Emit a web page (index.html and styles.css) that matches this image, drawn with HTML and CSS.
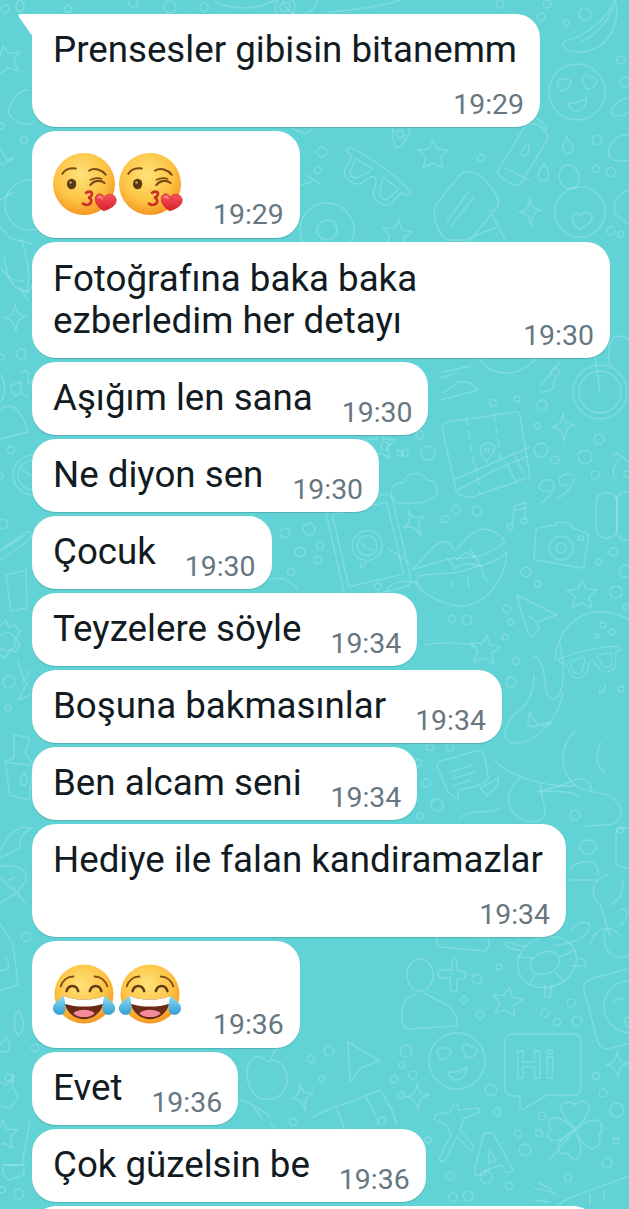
FILE: index.html
```html
<!DOCTYPE html>
<html lang="tr">
<head>
<meta charset="utf-8">
<title>Sohbet</title>
<link rel="stylesheet" href="styles.css">
</head>
<body>
<svg class="wallpaper" viewBox="0 0 629 1209" width="629" height="1209" aria-hidden="true">
  <defs>
    <path id="star4" d="M0-14C1-5 3-3 12-2 4 0 2 3 1 14-1 4-3 1-11 0-3-2-1-5 0-14Z"/>
    <path id="star5" d="M0-15 4-6 15-5 7 2 10 13 0 8-10 13-7 2-15-5-4-6Z" stroke-linejoin="round"/>
    <g id="heartface">
      <circle r="28"/>
      <path d="M-19-7c-2-5 3-8 6-5 3-3 9 0 6 5-1 3-5 6-9 6-1-2-2-4-3-6Z"/>
      <path d="M5-12c1-5 7-6 9-2 4-1 8 3 5 6-2 3-6 5-9 5-2-3-4-6-5-9Z"/>
      <path d="M-9 11c6 1 13-1 18-5 1 7-3 13-9 13-5 0-8-4-9-8Z"/>
    </g>
    <g id="glasses">
      <path d="M-36-15C-14-18 14-18 36-15 40-14 39-9 36-9L31-8 28 8C26 14 12 15 8 9L3-3C1-5-1-5-3-3L-8 9C-12 15-26 14-28 8L-31-8-36-9C-39-9-40-14-36-15Z"/>
      <path d="M-25-9-8-10C-7-10-7-8-8-6L-13 5C-15 9-21 9-23 6L-26-6C-26-8-26-9-25-9ZM25-9 8-10C7-10 7-8 8-6L13 5C15 9 21 9 23 6L26-6C26-8 26-9 25-9Z"/>
    </g>
  </defs>
  <g class="doodles">
    <!-- top strip -->
    <circle cx="5" cy="9" r="4"/><ellipse cx="20" cy="6" rx="4" ry="6"/><circle cx="68" cy="9" r="3.5"/>
    <circle cx="133" cy="2" r="5"/><circle cx="170" cy="7" r="6"/><circle cx="204" cy="7" r="4"/>
    <path d="M215 2C240 12 260 8 275 0"/><circle cx="285" cy="7" r="10"/><circle cx="285" cy="7" r="5"/>
    <circle cx="300" cy="-2" r="17"/><path d="M330 12C370 8 395 4 410 -4"/>
    <circle cx="500" cy="4" r="4"/><circle cx="547" cy="4" r="4"/>
    <circle cx="585" cy="14" r="6"/><circle cx="566" cy="23" r="3"/><circle cx="541" cy="17" r="4"/>
    <!-- banana -->
    <path d="M563 42C585 36 605 22 615 0 622 22 608 52 578 52 568 52 562 48 563 42ZM580 42C595 37 606 24 614 6"/>
    <use href="#heartface" x="577" y="92"/>
    <circle cx="621" cy="60" r="4"/><circle cx="625" cy="82" r="5"/><path d="M629 98C614 100 608 112 614 116 620 116 626 114 629 112"/>
    <!-- left top -->
    <use href="#star5" x="6" y="60" transform="rotate(-12 6 60)"/>
    <path d="M28 90C22 88 12 98 8 112 14 124 28 126 33 122"/><circle cx="1" cy="126" r="3"/>
    <circle cx="24" cy="140" r="3.5"/>
    <path d="M0 148 7 160 14 158 3 165 -4 160"/><circle cx="30" cy="205" r="25"/>
    <path d="M0 200 14 192M0 226 10 238 32 244"/><path d="M4 258 7 272C10 284 16 290 28 292L32 286"/><path d="M22 240C30 270 30 280 26 292M20 288 28 300"/>
    <!-- between rows top -->
    <path d="M300 185 312 182M306 175 320 184"/><path d="M292 128C310 138 310 130 313 128"/>
    <circle cx="322" cy="152" r="5"/><circle cx="318" cy="170" r="3.5"/>
    <use href="#glasses" transform="translate(372 181) rotate(36)"/>
    <path d="M400 120C392 125 390 132 396 148 404 145 410 136 411 120M400 130a4 4 0 1 0 .1 0"/>
    <circle cx="327" cy="230" r="27"/><circle cx="327" cy="230" r="10"/>
    <use href="#star5" x="397" y="235" transform="rotate(8 397 235)"/>
    <use href="#star5" x="433" y="155"/>
    <circle cx="481" cy="158" r="3.5"/>
    <!-- bottle -->
    <path d="M497 172 524 128C530 120 540 124 546 132 548 137 547 142 544 145L520 185C511 185 502 180 497 172ZM527 120 533 116C537 117 544 123 547 128L544 132M521 152C524 146 527 144 528 143 530 147 529 153 525 156 522 156 521 154 521 152ZM505 168 529 180"/>
    <path d="M563 145C566 140 568 137 566 136 570 142 575 148 572 152 568 155 562 152 563 145Z"/>
    <path d="M544 163C549 171 549 175 548 178 546 183 539 182 538 176 538 173 541 168 544 163Z"/>
    <ellipse cx="569" cy="177" rx="10" ry="12" transform="rotate(-15 569 177)"/>
    <circle cx="597" cy="140" r="5"/><circle cx="596" cy="169" r="3.5"/><circle cx="611" cy="172" r="4.5"/>
    <path d="M629 135C615 134 605 146 610 158 615 162 624 161 629 160"/>
    <path d="M438 202 460 175C468 168 480 172 490 186 500 198 500 204 495 210L470 240H447C436 232 430 210 438 202ZM447 222 468 192M451 226 474 197M490 210 505 240M465 240 495 228"/>
    <use href="#star4" x="530" y="212"/>
    <circle cx="580" cy="212" r="25"/>
    <path d="M572 218c0-5 7-7 9-2 3-6 12-4 11 3-1 5-8 8-13 10-3-3-7-6-7-11Z"/>
    <circle cx="611" cy="231" r="4"/><circle cx="621" cy="234" r="3"/><path d="M629 190C615 195 612 205 616 215L629 224"/>
    <!-- column right mid-top -->
    <circle cx="600" cy="392" r="27"/><circle cx="600" cy="392" r="21"/><path d="M595 354 600 392"/>
    <path d="M444 372 470 366M440 378 456 373M442 393C452 388 456 384 458 382 465 382 470 380 478 390L440 400"/>
    <path d="M480 360C490 376 520 380 538 356"/><circle cx="555" cy="372" r="4"/>
    <path d="M560 362C552 370 550 376 540 386M556 378 553 382C556 388 552 392 540 392"/>
    <path d="M629 340C615 330 605 340 610 365"/>
    <!-- map -->
    <path d="M442 428C442 424 444 423 447 422L515 412C518 411 519 412 520 415L530 477 472 497C462 497 458 495 456 490Z"/>
    <path d="M466 418 475 470M494 414 502 466M476 465 480 494" stroke-dasharray="7 6"/>
    <path d="M454 480 495 462 530 447M458 490 495 470 528 456M506 462 516 482M513 452 525 476"/>
    <path d="M487 462C490 454 497 450 494 446 491 441 484 442 481 447 479 451 483 458 487 462Z"/><circle cx="487" cy="450" r="2"/>
    <circle cx="493" cy="403" r="3.5"/><circle cx="517" cy="399" r="3"/><circle cx="542" cy="405" r="5"/>
    <circle cx="537" cy="426" r="3"/><circle cx="599" cy="439" r="5"/><circle cx="541" cy="450" r="7"/>
    <circle cx="555" cy="460" r="4"/><circle cx="585" cy="457" r="7"/><circle cx="595" cy="475" r="4"/>
    <circle cx="428" cy="453" r="7"/><circle cx="405" cy="453" r="3.5"/><circle cx="420" cy="435" r="4"/>
    <circle cx="456" cy="510" r="4"/><circle cx="445" cy="519" r="3.5"/><circle cx="477" cy="511" r="5"/>
    <circle cx="526" cy="572" r="5"/><circle cx="538" cy="584" r="3"/><circle cx="613" cy="552" r="4"/>
    <circle cx="599" cy="562" r="3"/><circle cx="616" cy="592" r="6"/><circle cx="507" cy="609" r="4"/>
    <circle cx="511" cy="622" r="3"/><circle cx="452" cy="619" r="3.5"/><circle cx="467" cy="620" r="5"/><circle cx="505" cy="637" r="3"/>
    <use href="#star4" x="563" y="427"/>
    <path d="M612 455C620 450 624 460 629 462M615 478C611 470 615 462 622 457"/>
    <!-- cloud -->
    <path d="M396 502C388 496 390 482 403 483 405 472 422 470 427 480 435 479 439 490 436 495 432 503 410 505 396 502Z"/>
    <!-- quotes -->
    <path d="M540 503C552 497 556 486 553 482 549 477 540 480 539 487 539 491 546 492 550 491M558 498C572 490 576 480 574 476 570 471 560 474 559 481 559 485 566 486 570 485"/>
    <!-- music note -->
    <path d="M512 525 515 506 526 502 525 519M515 511 526 507"/><circle cx="510" cy="527" r="3"/><circle cx="524" cy="521" r="3"/>
    <!-- camera -->
    <path d="M538 528 556 525 557 522 570 523 573 528 586 533C588 534 589 535 588 538L584 566C584 568 583 568 581 568L537 560C535 560 534 558 534 556L536 532C536 530 537 528 538 528Z"/>
    <circle cx="561" cy="548" r="12"/><circle cx="561" cy="548" r="5"/>
    <circle cx="581" cy="538" r="2.5"/>
    <rect x="596" y="493" width="21" height="45" rx="9"/><rect x="617" y="492" width="21" height="48" rx="8"/>
    <circle cx="627" cy="474" r="3"/>
    <use href="#star4" x="414" y="523" transform="rotate(-25 414 523)"/>
    <!-- lips -->
    <path d="M412 570C425 557 435 540 447 542 452 544 452 551 456 550 466 540 473 529 485 529 493 530 503 536 505 542 490 555 470 560 455 558 440 560 425 566 412 570Z"/>
    <path d="M418 576C440 572 450 575 458 572 468 570 475 567 483 565 488 563 502 560 507 552 506 575 490 602 465 606 445 606 425 596 416 584 416 582 417 578 418 576Z"/>
    <path d="M447 558 455 568M456 560 466 552 476 558 471 550M476 558 482 568M453 570C460 563 470 563 475 565 480 563 484 570 483 574M453 580 451 588M468 578 469 588M483 573 487 581"/>
    <!-- plane -->
    <path d="M517 595 557 615 536 622 539 627 533 638C528 636 520 610 517 595ZM536 622 529 616"/>
    <use href="#star5" x="582" y="595"/>
    <!-- face with glasses -->
    <path d="M555 660C557 632 575 612 600 612 612 612 622 615 629 620"/>
    <circle cx="603" cy="625" r="3"/><circle cx="612" cy="632" r="3"/><circle cx="597" cy="636" r="2"/>
    <use href="#glasses" transform="translate(592 664) rotate(-12) scale(.82)"/>
    <path d="M600 688C600 690 598 694 600 693 604 692 606 688 605 685"/><circle cx="621" cy="689" r="3"/>
    <path d="M425 645C440 642 460 642 475 646"/>
    <use href="#star5" x="485" y="650" transform="rotate(8 485 650)"/>
    <circle cx="625" cy="571" r="6"/><circle cx="626" cy="607" r="3"/>

    <!-- phone -->
    <g transform="rotate(-13 365 545)">
      <rect x="334" y="500" width="68" height="95" rx="7"/><rect x="340" y="508" width="56" height="74" rx="2"/><circle cx="368" cy="588" r="3.5"/>
      <circle cx="367" cy="546" r="15"/><circle cx="367" cy="546" r="10"/><path d="M357 560 355 567 362 562"/>
      <path d="M362 542C363 547 367 551 372 551"/>
    </g>
    <circle cx="285" cy="533" r="5"/><circle cx="309" cy="529" r="6"/><circle cx="320" cy="546" r="3.5"/>
    <circle cx="300" cy="552" r="5"/><circle cx="318" cy="560" r="3.5"/><circle cx="291" cy="572" r="3.5"/>
    <circle cx="385" cy="446" r="4"/><circle cx="400" cy="453" r="3"/>
    <use href="#star5" x="380" y="445"/>
    <path d="M412 565 388 548"/>
    <path d="M385 600C382 580 412 578 420 585"/>
    <path d="M270 580C283 575 292 582 298 590"/>

    <!-- mid right -->
    <path d="M534 657C540 655 545 672 546 690 548 705 562 700 563 680 565 670 562 655 560 642M534 675C535 685 530 702 520 710 505 720 500 740 512 743 540 745 560 712 563 693"/>
    <path d="M530 712C535 725 545 730 552 722 545 722 542 726 530 727 525 722 530 715 530 712"/>
    <circle cx="511" cy="682" r="5"/><circle cx="516" cy="661" r="3.5"/>
    <path d="M575 731C560 745 558 770 575 785 590 795 605 790 615 800 625 810 622 825 605 825L586 826"/>
    <path d="M601 743C595 755 595 765 605 773"/>
    <path d="M575 785C565 790 510 780 495 760"/><path d="M590 790C595 782 580 775 570 782 558 788 540 790 538 792 552 790 566 790 580 796 590 790Z"/>
    <path d="M520 778C505 790 504 808 520 818 535 826 545 820 545 812"/>
    <path d="M540 785 545 810"/><circle cx="575" cy="815" r="5"/>
    <path d="M438 769C436 764 438 762 441 761L476 751C480 750 483 752 484 755L488 775C489 778 488 780 485 782L477 786 458 790 458 800 448 792Z"/>
    <path d="M451 772 472 765M452 779 474 772M453 786 470 780"/><path d="M480 788 498 778 498 785 487 796 484 792Z"/>
    <circle cx="426" cy="783" r="4"/><circle cx="437" cy="805" r="6"/><circle cx="420" cy="816" r="3.5"/><circle cx="418" cy="763" r="3.5"/>
    <circle cx="430" cy="747" r="3.5"/><circle cx="450" cy="747" r="4"/>
    <path d="M460 818C470 808 490 815 500 808"/>
    <circle cx="620" cy="830" r="3"/>
    <path d="M629 828H620C617 829 616 832 616 835L616 860C616 864 618 867 622 867L629 868"/>
    <ellipse cx="588" cy="847" rx="8" ry="7"/>
    <path d="M570 870C575 860 600 856 598 875M570 880H595"/>
    <path d="M608 875C590 880 590 895 600 905 605 915 605 925 610 935M610 905C620 900 625 890 622 880M620 910C629 905 629 920 620 925"/>
    <path d="M570 930C580 920 590 920 590 928 585 940 565 945 555 945"/>
    <!-- lower right -->
    <path d="M437 935 488 937C490 945 488 950 485 951L440 947C437 946 436 941 437 935Z"/>
    <ellipse cx="420" cy="975" rx="13" ry="16"/>
    <path d="M424 993 447 1005C455 1012 458 1020 457 1026L408 1029C402 1028 401 1020 402 1010 404 1000 410 995 416 994"/>
    <path d="M452 961V970H441C437 971 437 977 441 978H450V988C451 993 457 993 457 988V979H463C467 978 467 971 463 971H457V961C456 957 452 957 452 961Z"/>
    <circle cx="477" cy="979" r="5"/><circle cx="464" cy="1000" r="3.5"/><circle cx="480" cy="1015" r="4"/>
    <circle cx="499" cy="967" r="3"/><circle cx="545" cy="1013" r="4"/><circle cx="557" cy="1022" r="3.5"/><circle cx="577" cy="1021" r="5"/>
    <circle cx="571" cy="1003" r="4"/>
    <use href="#star5" x="507" y="1002" transform="rotate(10 507 1002)"/>
    <!-- turtle -->
    <ellipse cx="547" cy="962" rx="30" ry="25" transform="rotate(-20 547 962)"/><ellipse cx="545" cy="963" rx="15" ry="11" transform="rotate(-20 545 963)"/>
    <path d="M560 957 575 950M555 972 565 982M535 975 530 984M533 958 518 957M545 985V996C546 999 549 999 550 996L552 985M578 958C585 960 588 963 586 966L572 966M520 950C510 950 503 945 507 942L525 947"/>
    <path d="M590 945C595 925 610 925 620 935M605 930C600 960 625 960 629 955"/>
    <g transform="rotate(-15 610 1010)">
      <rect x="590" y="975" width="72" height="72" rx="10"/><circle cx="630" cy="1012" r="26"/>
      <path d="M615 1005C618 1000 622 1000 625 1004M621 1022H645V1030C640 1035 628 1035 622 1030Z"/><path d="M629 1022V1034M636 1022V1034"/>
    </g>
    <use href="#heartface" x="457" y="1061"/>
    <path d="M513 1034H574C578 1034 581 1037 581 1041V1088C581 1092 578 1095 574 1095H547L524 1109C522 1110 520 1109 520 1107L520 1096H513C508 1095 505 1092 505 1088V1041C505 1037 508 1034 513 1034Z"/>
    <text class="hi" x="515" y="1078">Hi</text>
    <circle cx="406" cy="1051" r="6"/><circle cx="402" cy="1065" r="3"/><circle cx="413" cy="1075" r="4"/>
    <circle cx="491" cy="1090" r="6"/><circle cx="497" cy="1112" r="4"/><circle cx="542" cy="1116" r="4"/>
    <circle cx="596" cy="1076" r="3.5"/><circle cx="603" cy="1093" r="4"/><circle cx="617" cy="1110" r="7"/><circle cx="616" cy="1141" r="3"/>
    <circle cx="607" cy="1163" r="5"/><circle cx="568" cy="1178" r="3.5"/><circle cx="450" cy="1176" r="4"/>
    <circle cx="486" cy="1177" r="6"/><circle cx="509" cy="1186" r="3.5"/><circle cx="453" cy="1197" r="4"/><circle cx="468" cy="1196" r="5"/>
    <circle cx="518" cy="1134" r="4"/><circle cx="539" cy="1133" r="3.5"/><circle cx="525" cy="1150" r="6"/>
    <use href="#star4" x="617" y="1065"/>
    <use href="#star4" x="417" y="1097"/>
    <use href="#star4" x="302" y="1097" transform="rotate(-10 302 1097)"/>
    <!-- translate -->
    <path d="M435 1120C433 1118 435 1115 438 1114L450 1112 452 1106C454 1103 457 1103 458 1106L459 1110 477 1108C480 1108 481 1112 478 1113L464 1118 460 1130 473 1145C475 1148 472 1151 469 1149L457 1137 445 1160C443 1163 438 1160 440 1157L451 1135 447 1125 438 1121"/>
    <path d="M484 1133H493L513 1170C512 1173 507 1174 505 1171L502 1165 486 1170 484 1176 476 1175C474 1172 475 1170 475 1168Z"/>
    <path d="M490 1150 496 1161 488 1163Z"/>
    <!-- clover -->
    <path d="M575 1128C565 1120 558 1108 562 1104 570 1100 574 1103 575 1105 578 1100 585 1100 588 1104 592 1110 583 1122 575 1130ZM575 1130C587 1120 598 1118 600 1122 604 1128 602 1134 598 1134 602 1138 600 1146 594 1148 588 1150 579 1140 575 1130ZM575 1130C581 1143 583 1152 578 1158 574 1160 570 1158 568 1153 563 1156 558 1152 558 1148 558 1140 568 1134 575 1130ZM575 1130C568 1136 558 1142 552 1140 546 1138 548 1131 552 1130 548 1126 548 1120 552 1118 560 1116 570 1124 575 1130ZM575 1130 549 1160"/>
    <!-- bottom right -->
    <path d="M538 1182 552 1190M535 1188C540 1190 550 1190 557 1195M534 1200 548 1202"/>
    <path d="M556 1208C560 1198 600 1188 629 1176"/><path d="M590 1205V1195M604 1200V1190"/>
    <!-- apple etc -->
    <path d="M268 1062C256 1050 246 1062 247 1075 248 1090 258 1102 268 1099 282 1100 290 1085 286 1072 282 1060 272 1058 268 1062ZM271 1060C272 1052 277 1048 282 1044"/>
    <path d="M348 1042 380 1061 362 1067 350 1082Z"/>
    <circle cx="311" cy="1059" r="3.5"/><circle cx="329" cy="1051" r="5"/><circle cx="322" cy="1079" r="3"/><circle cx="394" cy="1079" r="3.5"/>
    <circle cx="401" cy="1095" r="3.5"/>
    <path d="M313 1118C316 1114 330 1108 345 1104L380 1090 392 1110 397 1125M335 1105 345 1130M365 1095 380 1125M377 1125C381 1110 391 1120 383 1125"/>
    <path d="M240 1100C250 1103 262 1110 270 1116M252 1105 262 1118M270 1122 275 1128"/>
    <circle cx="293" cy="1122" r="3.5"/><circle cx="428" cy="1140" r="3"/>
    <!-- left column -->
    <path d="M0 268 10 278C16 282 20 282 24 280"/>
    <use href="#star4" x="15" y="318"/><circle cx="21" cy="354" r="5"/><circle cx="1" cy="357" r="3"/>
    <path d="M21 373 25 370 28 373V383H31M11 385 21 382 21 393 15 396 11 390ZM23 394 28 398"/>
    <path d="M0 375C6 378 6 398 0 402"/><path d="M0 410C9 402 20 405 28 432L0 439"/>
    <circle cx="11" cy="450" r="3.500"/><circle cx="0" cy="476" r="3"/>
    <circle cx="33" cy="475" r="20"/><circle cx="33" cy="475" r="15"/><path d="M22 470 33 477"/>
    <circle cx="3" cy="524" r="5"/>
    <path d="M-2 552 26 532C30 530 34 536 30 539L4 558C0 561 -3 558 -2 552ZM4 549 24 536"/>
    <path d="M6 575 26 570 27 608 11 611Z"/>
    <circle cx="7" cy="642" r="9"/><path d="M0 626 6 620 9 628 14 624 20 632 16 638 20 645 15 652 10 650 5 658 0 655"/>
    <circle cx="9" cy="682" r="6"/><path d="M18 660 24 682 30 670M28 682 18 700 30 695"/><circle cx="8" cy="708" r="3"/>
    <!-- carton -->
    <path d="M14 735V758L5 762 10 795 29 800 33 765 25 752 30 738 14 735ZM5 762 30 765"/>
    <path d="M25 773C28 778 29 783 25 785 21 786 19 782 21 778Z"/>
    <path d="M0 850C14 825 24 826 32 828 20 835 20 840 20 846M0 858 20 848"/>
    <path d="M0 866H10C20 866 28 872 26 880L18 892 0 903M0 877 12 890M8 880 14 878M12 886 25 903"/>
    <circle cx="26" cy="937" r="4.500"/>
    <path d="M-2 920 13 945 18 985 0 990"/>
    <path d="M5 955C10 965 10 968 5 970 0 972 -3 970 -4 965"/>
    <path d="M18 1010C25 1020 25 1030 18 1036 14 1030 12 1020 18 1010Z"/>
    <path d="M7 1037C10 1046 11 1050 6 1052 1 1053 -3 1048 -1 1045Z"/>
    <circle cx="35" cy="1048" r="3.500"/>
    <path d="M6 1085 14 1075 12 1085 18 1098 10 1108 0 1106M6 1085 0 1082"/><circle cx="9" cy="1078" r="4"/>
    <use href="#star5" x="3" y="1135"/>
    <path d="M30 1120 22 1165H5"/><path d="M3 1165H24V1175L10 1180C4 1180 2 1170 3 1165Z"/>
    <circle cx="19" cy="1194" r="5"/><circle cx="2" cy="1190" r="3"/>
  </g>
</svg>

<main class="chat">
  <div class="bubble bubble-stacked bubble-tail">
    <p class="text">Prensesler gibisin bitanemm</p>
    <span class="time">19:29</span>
  </div>
  <div class="bubble bubble-emoji">
    <div class="emojis">
      <svg class="emoji" viewBox="0 0 60 60" role="img" aria-label="😘"><use href="#kiss"/></svg>
      <svg class="emoji" viewBox="0 0 60 60" role="img" aria-label="😘"><use href="#kiss"/></svg>
    </div>
    <span class="time">19:29</span>
  </div>
  <div class="bubble bubble-wide">
    <p class="text">Fotoğrafına baka baka<br>ezberledim her detayı</p>
    <span class="time">19:30</span>
  </div>
  <div class="bubble">
    <p class="text">Aşığım len sana</p>
    <span class="time">19:30</span>
  </div>
  <div class="bubble">
    <p class="text">Ne diyon sen</p>
    <span class="time">19:30</span>
  </div>
  <div class="bubble">
    <p class="text">Çocuk</p>
    <span class="time">19:30</span>
  </div>
  <div class="bubble">
    <p class="text">Teyzelere söyle</p>
    <span class="time">19:34</span>
  </div>
  <div class="bubble">
    <p class="text">Boşuna bakmasınlar</p>
    <span class="time">19:34</span>
  </div>
  <div class="bubble">
    <p class="text">Ben alcam seni</p>
    <span class="time">19:34</span>
  </div>
  <div class="bubble bubble-stacked">
    <p class="text">Hediye ile falan kandiramazlar</p>
    <span class="time">19:34</span>
  </div>
  <div class="bubble bubble-emoji">
    <div class="emojis">
      <svg class="emoji" viewBox="0 0 60 60" role="img" aria-label="😂"><use href="#joy"/></svg>
      <svg class="emoji" viewBox="0 0 60 60" role="img" aria-label="😂"><use href="#joy"/></svg>
    </div>
    <span class="time">19:36</span>
  </div>
  <div class="bubble">
    <p class="text">Evet</p>
    <span class="time">19:36</span>
  </div>
  <div class="bubble">
    <p class="text">Çok güzelsin be</p>
    <span class="time">19:36</span>
  </div>
  <div class="bubble bubble-next"></div>
</main>

<svg class="emoji-defs" width="0" height="0" aria-hidden="true">
  <defs>
    <radialGradient id="face" cx=".45" cy=".35" r=".7">
      <stop offset="0" stop-color="#ffe27a"/><stop offset=".6" stop-color="#fdc343"/><stop offset="1" stop-color="#f28f1c"/>
    </radialGradient>
    <linearGradient id="tear" x1="0" y1="0" x2="0" y2="1">
      <stop offset="0" stop-color="#8fdcf2"/><stop offset="1" stop-color="#2f9ed2"/>
    </linearGradient>
    <linearGradient id="heart" x1="0" y1="0" x2="0" y2="1">
      <stop offset="0" stop-color="#f8555b"/><stop offset="1" stop-color="#d81f2a"/>
    </linearGradient>
    <symbol id="kiss" viewBox="0 0 60 60" overflow="visible">
      <circle cx="30" cy="30" r="30" fill="url(#face)"/>
      <path d="M9 20C11 16 17 14 22 15" class="brow"/>
      <path d="M35 17C40 14 47 16 51 21" class="brow"/>
      <ellipse cx="18" cy="30" rx="4.500" ry="5" fill="#5b3a12"/>
      <circle cx="17" cy="28.500" r="1.200" fill="#c9a36a"/>
      <path d="M36 31C40 26 46 26 50 29" class="brow"/>
      <path d="M36 26C40 24 44 24 47 25" class="brow thin"/>
      <path d="M32 38.500C36 36 39 38 37 41.500 36 43 34.500 43 34 43 38 44 38 49 34 50 32 51 30.500 50 29 49" class="mouth"/>
      <path d="M49 56C42 52 39 45 42 41 45 38 48 39.500 49.500 43 52 39 58 39 60.500 43 63 48 59 53 49 56Z" fill="url(#heart)" stroke="#b71c25" stroke-width=".5"/>
      <path d="M44 43C45 42 47 42 47.500 44" stroke="#ff9a9a" stroke-width="1.500" fill="none" stroke-linecap="round"/>
    </symbol>
    <symbol id="joy" viewBox="0 0 64 64" overflow="visible">
      <circle cx="32" cy="32" r="30.500" fill="url(#face)"/>
      <path d="M8 24C10 18 15 14 21 14" class="brow"/>
      <path d="M43 14C49 14 54 18 56 24" class="brow"/>
      <path d="M14 29C16 22 24 22 26 29" class="eye"/>
      <path d="M38 29C40 22 48 22 50 29" class="eye"/>
      <path d="M11 34C22 39 42 39 53 34 53 48 44 58 32 58 20 58 11 48 11 34Z" fill="#6b2a16"/>
      <path d="M11 34C22 39 42 39 53 34 53 38 52.500 40 52 42 40 46 24 46 12 42 11.500 40 11 38 11 34Z" fill="#fff"/>
      <path d="M21 52C25 47 39 47 43 52 39 57 25 57 21 52Z" fill="#f58a9a"/>
      <path d="M11 34C4 39 -1 43 0 48 1 53 7 55 11 52 14 49 13 41 11 34Z" fill="url(#tear)"/>
      <path d="M53 34C60 39 65 43 64 48 63 53 57 55 53 52 50 49 51 41 53 34Z" fill="url(#tear)"/>
    </symbol>
  </defs>
</svg>
</body>
</html>
```

FILE: styles.css
```css
html, body {
  margin: 0;
  padding: 0;
}

body {
  position: relative;
  width: 629px;
  height: 1209px;
  overflow: hidden;
  background: #61d3d7;
  font-family: Roboto, "Liberation Sans", sans-serif;
}

.wallpaper {
  position: absolute;
  top: 0;
  left: 0;
}

.doodles {
  fill: none;
  stroke: #fff;
  stroke-opacity: 0.19;
  stroke-width: 1.5;
  stroke-linecap: round;
  stroke-linejoin: round;
}

.hi {
  font-family: "Liberation Sans", sans-serif;
  font-size: 38px;
  font-weight: 700;
  letter-spacing: 2px;
}

.emoji-defs {
  position: absolute;
}

.chat {
  position: relative;
  box-sizing: border-box;
  height: 1209px;
  overflow: hidden;
  display: flex;
  flex-direction: column;
  align-items: flex-start;
  gap: 4px;
  padding: 14px 0 0 32px;
}

.bubble {
  position: relative;
  flex: none;
  display: flex;
  gap: 29px;
  box-sizing: border-box;
  padding: 16px 16px 6px 21px;
  background: #fff;
  border-radius: 24px;
  box-shadow: 0 1px 1px rgba(11, 20, 26, 0.18);
}

.bubble-stacked {
  flex-direction: column;
  gap: 0;
}

.bubble-stacked .text {
  margin-right: 7px;
}

.bubble-stacked .time {
  align-self: flex-end;
}

.bubble-wide {
  gap: 106px;
  padding-bottom: 6.5px;
}

.bubble-tail {
  border-top-left-radius: 0;
}

.bubble-tail::before {
  content: "";
  position: absolute;
  top: 0;
  left: -14px;
  width: 15px;
  height: 23px;
  background: #fff;
  clip-path: polygon(0 0, 100% 0, 100% 100%, 1px 3px);
  border-top-left-radius: 2px;
}

.bubble-emoji {
  gap: 32px;
  padding-bottom: 6.5px;
}

.bubble-next {
  width: 565px;
  height: 73px;
}

.text {
  margin: 0;
  font-size: 36.7px;
  line-height: 40px;
  color: #111b21;
  white-space: nowrap;
}

.bubble-wide .text {
  line-height: 42px;
}

.time {
  margin-top: 19px;
  font-size: 28.4px;
  line-height: 32px;
  color: #667781;
  white-space: nowrap;
}

.bubble-wide .time {
  margin-top: 62px;
}

.bubble-emoji .time {
  margin-top: 52px;
}

.emojis {
  display: flex;
  gap: 4px;
  margin-top: 6px;
}

.emoji {
  display: block;
  width: 62px;
  height: 62px;
  overflow: visible;
}

.brow, .eye, .mouth {
  fill: none;
  stroke-linecap: round;
}

.brow {
  stroke: #7a4a14;
  stroke-width: 2;
}

.brow.thin {
  stroke-width: 1.5;
}

.eye {
  stroke: #5b3a12;
  stroke-width: 2.6;
}

.mouth {
  stroke: #c9302c;
  stroke-width: 2.6;
}
```
